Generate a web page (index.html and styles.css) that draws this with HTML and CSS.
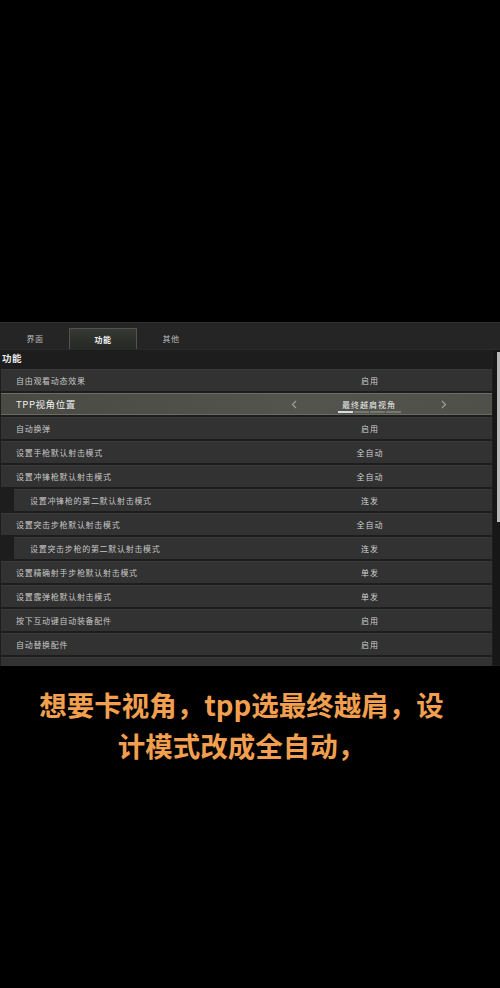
FILE: index.html
```html
<!DOCTYPE html>
<html lang="zh-CN">
<head>
<meta charset="utf-8">
<title>设置 - 功能</title>
<link rel="stylesheet" href="styles.css">
</head>
<body>
<main class="screen">
  <section class="panel">
    <nav class="tabs">
      <span class="tab">界面</span>
      <span class="tab active">功能</span>
      <span class="tab">其他</span>
    </nav>
    <div class="panel-body">
      <div class="list">
        <div class="section-title">功能</div>

        <div class="row"><span class="label">自由观看动态效果</span><span class="value">启用</span></div>

        <div class="row selected">
          <span class="label">TPP视角位置</span>
          <span class="value picker">
            <svg class="chev" width="6" height="9" viewBox="0 0 6 9"><path d="M5 1 L1.5 4.5 L5 8" /></svg>
            <span class="picker-center">
              <span class="picker-text">最终越肩视角</span>
              <span class="pager"><i class="on"></i><i></i><i></i><i></i></span>
            </span>
            <svg class="chev" width="6" height="9" viewBox="0 0 6 9"><path d="M1 1 L4.5 4.5 L1 8" /></svg>
          </span>
        </div>

        <div class="row"><span class="label">自动换弹</span><span class="value">启用</span></div>
        <div class="row"><span class="label">设置手枪默认射击模式</span><span class="value">全自动</span></div>
        <div class="row"><span class="label">设置冲锋枪默认射击模式</span><span class="value">全自动</span></div>
        <div class="row sub"><span class="label">设置冲锋枪的第二默认射击模式</span><span class="value">连发</span></div>
        <div class="row"><span class="label">设置突击步枪默认射击模式</span><span class="value">全自动</span></div>
        <div class="row sub"><span class="label">设置突击步枪的第二默认射击模式</span><span class="value">连发</span></div>
        <div class="row"><span class="label">设置精确射手步枪默认射击模式</span><span class="value">单发</span></div>
        <div class="row"><span class="label">设置霰弹枪默认射击模式</span><span class="value">单发</span></div>
        <div class="row"><span class="label">按下互动键自动装备配件</span><span class="value">启用</span></div>
        <div class="row"><span class="label">自动替换配件</span><span class="value">启用</span></div>
        <div class="row"></div>
      </div>
      <div class="scrollbar"><div class="thumb"></div></div>
    </div>
  </section>

  <p class="caption">想要卡视角，tpp选最终越肩，设<br>计模式改成全自动，</p>
</main>
</body>
</html>
```

FILE: styles.css
```css
* {
  box-sizing: border-box;
}

html,
body {
  margin: 0;
  padding: 0;
  background: #000;
}

body {
  width: 500px;
  height: 988px;
  overflow: hidden;
  font-family: "Noto Sans CJK SC", "Noto Sans", sans-serif;
}

.screen {
  padding-top: 322px;
}

/* settings panel */
.panel {
  height: 344px;
  overflow: hidden;
  background: #1d1d1d;
}

.tabs {
  height: 28px;
  display: flex;
  align-items: flex-end;
  padding-left: 1px;
  background: #252525;
  border-top: 1px solid #2f2f2f;
  border-bottom: 1px solid #2a2a2a;
}

.tab {
  width: 68px;
  height: 21px;
  display: flex;
  align-items: center;
  justify-content: center;
  font-size: 8px;
  letter-spacing: 0.6px;
  color: #b9b9b9;
}

.tab.active {
  height: 21px;
  color: #f2f2f2;
  font-weight: bold;
  background: linear-gradient(#353833, #262825);
  border: 1px solid #50534e;
  border-bottom: none;
}

.panel-body {
  display: flex;
  height: 315px;
}

.list {
  width: 493px;
}

.section-title {
  height: 19px;
  line-height: 17px;
  padding-left: 2px;
  font-size: 9.5px;
  font-weight: bold;
  color: #ececec;
  letter-spacing: 0.4px;
}

/* setting rows */
.row {
  height: 22px;
  margin: 0 1px 2px 1px;
  display: flex;
  align-items: center;
  background: #323232;
  box-shadow: inset 0 1px 0 #3a3a3a;
}

.row.sub {
  margin-left: 14px;
}

.label {
  flex: 1;
  padding-left: 15px;
  font-size: 8px;
  letter-spacing: 0.7px;
  color: #c6c6c6;
  white-space: nowrap;
}

.row.sub .label {
  padding-left: 16px;
}

.value {
  width: 180px;
  margin-right: 32px;
  text-align: center;
  font-size: 8px;
  letter-spacing: 1px;
  color: #cfcfcf;
}

/* highlighted row with option picker */
.row.selected {
  background: linear-gradient(90deg, #494a44, #53544e 60%, #4f504a);
  border-top: 1px solid #6c6d66;
  border-bottom: 1px solid #6a6b64;
  box-shadow: none;
}

.row.selected .label {
  font-size: 9.5px;
  letter-spacing: 0.6px;
  color: #f0f0f0;
}

.picker {
  display: flex;
  align-items: center;
  justify-content: space-between;
  align-self: stretch;
  padding: 0 13px 0 11px;
}

.chev {
  fill: none;
  stroke: #9d9d98;
  stroke-width: 1.2;
}

.picker-center {
  display: flex;
  flex-direction: column;
  align-items: center;
  align-self: stretch;
  padding-top: 5px;
}

.picker-text {
  line-height: 11px;
  color: #eeeeee;
}

.pager {
  display: flex;
  gap: 1px;
  margin-top: 1px;
}

.pager i {
  width: 15px;
  height: 2px;
  background: #77786f;
}

.pager i.on {
  background: #dcdcdc;
}

/* scrollbar */
.scrollbar {
  width: 7px;
  background: #171717;
  padding-top: 2px;
  display: flex;
  justify-content: flex-end;
  align-items: flex-start;
}

.thumb {
  width: 3px;
  height: 170px;
  background: #b8b8b8;
}

/* caption */
.caption {
  margin: 18px 0 0 0;
  padding-right: 17px;
  text-align: center;
  font-size: 27.5px;
  line-height: 41px;
  font-weight: bold;
  color: #f2a04f;
  letter-spacing: 0;
}
```
